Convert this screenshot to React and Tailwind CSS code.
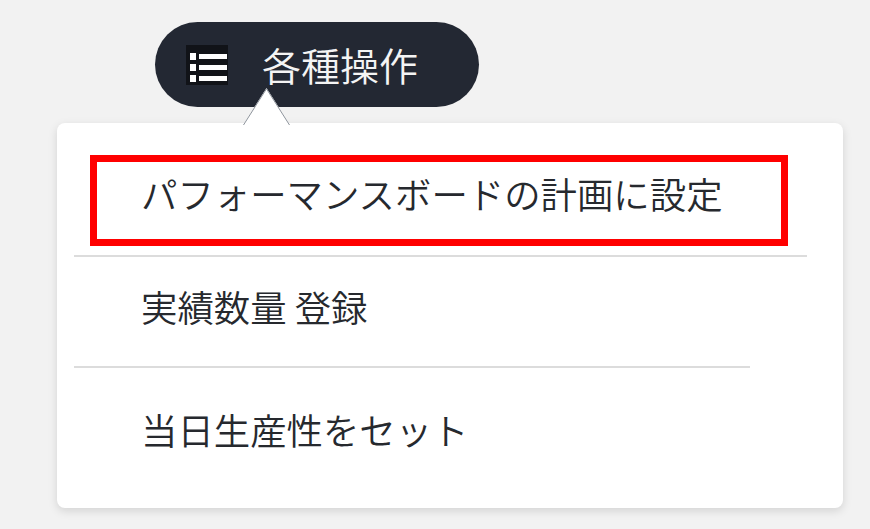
import React from 'react';

function ListIcon() {
  return (
    <svg width="42" height="40" viewBox="0 0 42 40" className="shrink-0">
      <rect x="0" y="0" width="42" height="40" fill="#111318" />
      <rect x="4" y="8" width="6" height="7" fill="#fff" />
      <rect x="13" y="9" width="28" height="5" fill="#fff" />
      <rect x="4" y="19" width="6" height="7" fill="#fff" />
      <rect x="13" y="20" width="28" height="5" fill="#fff" />
      <rect x="4" y="30" width="6" height="7" fill="#fff" />
      <rect x="13" y="31" width="28" height="5" fill="#fff" />
    </svg>
  );
}

export default function App() {
  const font = { fontFamily: '"Noto Sans CJK JP", "Noto Sans", sans-serif' };

  return (
    <div className="w-full h-[529px] bg-[#f2f2f2] overflow-hidden pt-[22px]" style={font}>
      {/* トリガーボタン */}
      <div className="ml-[155px] w-[324px] h-[85px] rounded-full bg-[#232833] flex items-center pl-[31px] gap-[34px]">
        <ListIcon />
        <span className="text-[39px] leading-[40px] font-[350] text-[#f4f4f4] -mt-[2px]">各種操作</span>
      </div>

      {/* メニュー */}
      <div className="relative ml-[57px] mt-[16px] w-[786px] h-[385px] bg-white rounded-[8px] shadow-[0_3px_10px_rgba(0,0,0,0.13)] pt-[32px]">
        <svg className="absolute left-[186px] top-[-35px]" width="47" height="37" viewBox="0 0 47 37">
          <polygon points="0,37 23.5,0 47,37" fill="#ffffff" />
          <polyline points="0.5,37 23.5,0.8 46.5,37" fill="none" stroke="#8d939b" strokeWidth="1" />
        </svg>

        <div className="ml-[33px] w-[698px] h-[91px] border-[7px] border-[#ff0000] pt-[13px] pl-[44px]">
          <span className="text-[36.4px] leading-[36px] font-[350] text-[#26292e] whitespace-nowrap">パフォーマンスボードの計画に設定</span>
        </div>

        <div className="ml-[17px] mt-[9px] w-[733px] h-[2px] bg-[#dcdcdc]" />

        <div className="pl-[84px] mt-[31px] text-[36.4px] leading-[36px] font-[350] text-[#26292e]">実績数量 登録</div>

        <div className="ml-[17px] mt-[42px] w-[676px] h-[2px] bg-[#dcdcdc]" />

        <div className="pl-[84px] mt-[43px] text-[36.4px] leading-[36px] font-[350] text-[#26292e]">当日生産性をセット</div>
      </div>
    </div>
  );
}
